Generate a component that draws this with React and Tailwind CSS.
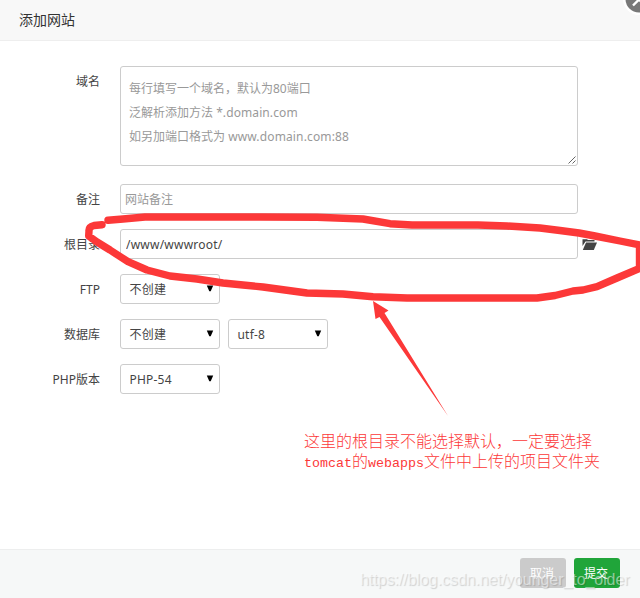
const labelClass = "w-[100px] shrink-0 pt-px text-right leading-[30px]";
const fieldClass =
  "h-[30px] rounded-[3px] border border-[#ccc] bg-white outline-none";

const Row = ({ label, children }) => (
  <div className="flex h-[30px] gap-5">
    <label className={labelClass}>{label}</label>
    <div className="flex items-center">{children}</div>
  </div>
);

const Select = ({ value, className = "" }) => (
  <button
    type="button"
    className={`${fieldClass} ${className} flex w-[100px] items-center justify-between pl-[8.5px] pr-[5px] text-left`}
  >
    <span className="pt-0.5 tracking-[0.2px]">{value}</span>
    <svg width="8" height="7" viewBox="0 0 8 7" className="mb-0.5">
      <path d="M0.8 0.5h6.4L4.7 6.3H3.3z" fill="#000" />
    </svg>
  </button>
);

const FolderIcon = () => (
  <svg width="15" height="11" viewBox="0 0 15 11" className="ml-1">
    <path d="M0.5 7V0.3h4.5L6 1H12.5V2.5H3.5z" fill="#444" />
    <path d="M4 3.5h11L11.8 11H0.8z" fill="#444" />
  </svg>
);

const Annotation = () => (
  <>
    <svg
      className="pointer-events-none absolute left-0 top-0"
      width="640"
      height="598"
      viewBox="0 0 640 598"
      fill="none"
    >
      <g
        stroke="#fc3838"
        strokeWidth="7.4"
        strokeLinecap="round"
        strokeLinejoin="round"
      >
        <path d="M102 224.7L94 225.5Q88.5 227 89 231L88.7 236L97 242L110 250L128 261.7L147 270L170 276L197 279L223 283L243 285L263 287L307 293L343 294L373 296.7L407 298H537L555 295.5L573 291L583 290L597 286.7L617 278L639.5 268.5V245L620 241L595 236L579 233L560 230.5L540 228L507 226L478 225H412L390 223.7L363 219L317 217.3L260 217H145L123 219L108 220.3" />
      </g>
      <path
        d="M373 301L388.5 310.5L384.5 313L448 416L379.5 317L375.5 319z"
        fill="#fc3838"
      />
    </svg>
    <p className="absolute left-[304px] top-[433px] whitespace-nowrap font-['Liberation_Mono','Noto_Sans_CJK_SC',monospace] text-[16px] font-light leading-[20px] text-[#fc3838]">
      这里的根目录不能选择默认，一定要选择
      <br />
      <span className="text-[13.33px]">tomcat</span>
      的
      <span className="text-[13.33px]">webapps</span>
      文件中上传的项目文件夹
    </p>
  </>
);

const App = () => {
  return (
    <div className="relative flex h-[598px] w-[640px] flex-col overflow-hidden bg-white font-['Noto_Sans','Noto_Sans_CJK_SC',sans-serif] text-[12px] text-[#444]">
      <header className="h-[41px] shrink-0 border-b border-[#eee] bg-[#f8f8f8] pl-[19px] text-[14px] leading-[40px] text-[#333]">
        添加网站
      </header>

      <svg
        className="absolute left-[623px] top-[-17px]"
        width="32"
        height="32"
        viewBox="0 0 32 32"
      >
        <circle cx="16" cy="16" r="16" fill="#fff" />
        <circle cx="16" cy="16" r="13.5" fill="#787878" />
        <path d="M10 22.5L21.5 11M10.5 11L22 22.5" stroke="#fff" strokeWidth="2.4" />
      </svg>

      <main className="flex flex-1 flex-col gap-[15px] pt-[25px]">
        <div className="mb-[3px] flex h-[100px] gap-5">
          <label className={labelClass}>域名</label>
          <div className="relative h-[100px] w-[458px] rounded-[3px] border border-[#ccc] pl-2 pt-[10px] leading-[24px] text-[#999]">
            <p>每行填写一个域名，默认为80端口</p>
            <p>
              泛解析添加方法 <span className="tracking-[0.1px]">*.domain.com</span>
            </p>
            <p>
              如另加端口格式为 <span className="tracking-[0.14px]">www.domain.com:88</span>
            </p>
            <svg
              className="absolute bottom-px right-px"
              width="8"
              height="8"
              viewBox="0 0 8 8"
            >
              <path d="M0.5 7.5L7.5 0.5M4.5 7.5L7.5 4.5" stroke="#555" strokeWidth="0.9" />
            </svg>
          </div>
        </div>
        <Row label="备注">
          <input
            className={`${fieldClass} w-[458px] px-1 placeholder:text-[#999]`}
            placeholder="网站备注"
          />
        </Row>
        <Row label="根目录">
          <input
            className={`${fieldClass} w-[458px] px-[5px] tracking-[0.22px]`}
            defaultValue="/www/wwwroot/"
          />
          <FolderIcon />
        </Row>
        <Row label="FTP">
          <Select value="不创建" />
        </Row>
        <Row label="数据库">
          <Select value="不创建" />
          <Select value="utf-8" className="ml-2" />
        </Row>
        <Row label="PHP版本">
          <Select value="PHP-54" />
        </Row>
      </main>

      <footer className="flex h-[49px] shrink-0 justify-end gap-2 border-t border-[#edeeee] bg-[#f6f8f8] pr-5 pt-2 text-white">
        <button type="button" className="h-[30px] w-[46px] rounded-[3px] bg-[#cbcbcb] pr-0.5 pt-0.5">
          取消
        </button>
        <button type="button" className="h-[30px] w-[46px] rounded-[3px] bg-[#20a53a] pr-0.5 pt-0.5">
          提交
        </button>
      </footer>

      <Annotation />

      <span className="absolute left-[360px] top-[570px] whitespace-nowrap font-['Liberation_Sans',sans-serif] text-[16px] leading-[20px] tracking-[-0.07px] text-white/50 [text-shadow:1px_1px_1px_rgba(0,0,0,0.16)]">
        https://blog.csdn.net/younger_to_older
      </span>
    </div>
  );
};

export default App;
